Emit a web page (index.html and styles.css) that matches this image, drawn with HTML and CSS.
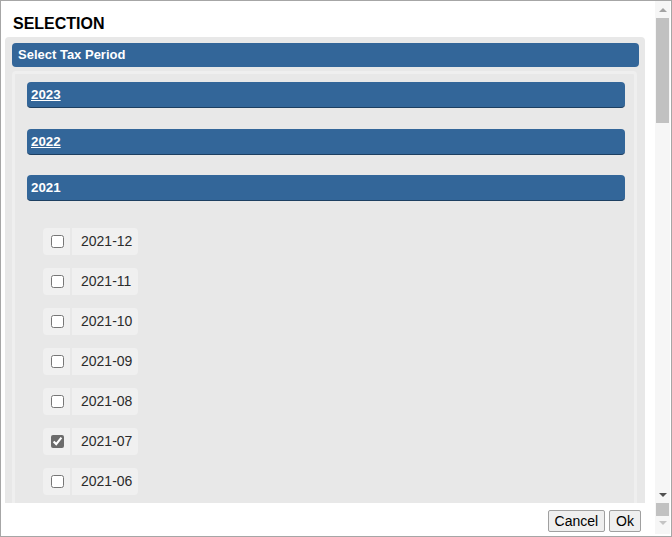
FILE: index.html
```html
<!DOCTYPE html>
<html lang="en">
<head>
    <meta charset="UTF-8">
    <title>Selection</title>
    <link rel="stylesheet" href="styles.css">
</head>
<body>
    <div class="dialog">
        <div class="dialog-body">
            <div class="scroll-area">
                <h1 class="title">SELECTION</h1>
                <!-- Panel with the tax periods -->
                <div class="panel">
                    <div class="panel-header">Select Tax Period</div>
                    <div class="panel-inner">
                        <div class="year-bar"><a href="#">2023</a></div>
                        <div class="year-bar"><a href="#">2022</a></div>
                        <div class="year-bar open">2021</div>
                        <ul class="periods">
                            <li class="period"><span class="check-cell"><input type="checkbox"></span><span class="period-label">2021-12</span></li>
                            <li class="period"><span class="check-cell"><input type="checkbox"></span><span class="period-label">2021-11</span></li>
                            <li class="period"><span class="check-cell"><input type="checkbox"></span><span class="period-label">2021-10</span></li>
                            <li class="period"><span class="check-cell"><input type="checkbox"></span><span class="period-label">2021-09</span></li>
                            <li class="period"><span class="check-cell"><input type="checkbox"></span><span class="period-label">2021-08</span></li>
                            <li class="period"><span class="check-cell"><input type="checkbox" checked></span><span class="period-label">2021-07</span></li>
                            <li class="period"><span class="check-cell"><input type="checkbox"></span><span class="period-label">2021-06</span></li>
                        </ul>
                    </div>
                </div>
            </div>
            <!-- Fake scrollbar -->
            <div class="vscroll">
                <div class="arrow up"></div>
                <div class="thumb"></div>
                <div class="track"></div>
                <div class="arrow down"></div>
            </div>
        </div>
        <div class="dialog-footer">
            <button class="btn">Cancel</button>
            <button class="btn">Ok</button>
            <div class="vscroll small">
                <div class="thumb"></div>
                <div class="arrow down light"></div>
            </div>
        </div>
    </div>
</body>
</html>
```

FILE: styles.css
```css
/* Page */
body {
    margin: 0;
    font-family: "Liberation Sans", Arial, sans-serif;
    background-color: #fff;
}
/* Dialog frame */
.dialog {
    width: 672px;
    height: 537px;
    box-sizing: border-box;
    border: 1px solid #a6a6a6;
    display: flex;
    flex-direction: column;
}
.dialog-body {
    height: 502px;
    display: flex;
}
.scroll-area {
    flex: 1;
    overflow: hidden;
}
/* Title */
.title {
    margin: 14px 0 4px 12px;
    font-size: 16px;
    line-height: 18px;
    font-weight: bold;
    color: #000;
}
/* Grey panel */
.panel {
    margin: 0 10px 0 4px;
    background-color: #e8e8e8;
    border-radius: 4px 4px 0 0;
    padding-top: 6px;
    height: 600px;
}
.panel-header {
    margin: 0 6px 0 7px;
    height: 24px;
    line-height: 24px;
    padding-left: 6px;
    background-color: #336699;
    color: #fff;
    font-size: 13px;
    font-weight: bold;
    border-radius: 4px;
}
.panel-inner {
    margin: 4px 8px 0 7px;
    border: 3px solid #efefef;
    border-bottom: none;
    border-radius: 4px 4px 0 0;
    padding: 8px 9px 0 12px;
    height: 600px;
}
/* Year bars */
.year-bar {
    height: 25px;
    line-height: 26px;
    padding-left: 4px;
    background-color: #336699;
    border-bottom: 1px solid #1d3f61;
    border-radius: 4px;
    color: #fff;
    font-size: 13.33px;
    font-weight: bold;
    margin-bottom: 21px;
}
.year-bar:nth-child(2) {
    margin-bottom: 20px;
}
.year-bar a {
    color: #fff;
}
.year-bar.open {
    margin-bottom: 27px;
}
/* Period rows */
.periods {
    list-style: none;
    margin: 0;
    padding: 0 0 0 16px;
}
.period {
    display: flex;
    gap: 2px;
    height: 27px;
    margin-bottom: 13px;
}
.check-cell {
    width: 27px;
    background-color: #f0f0f0;
    border-radius: 4px 0 0 4px;
    display: flex;
    align-items: center;
    justify-content: center;
}
.check-cell input {
    margin: 0 0 0 1px;
    width: 13px;
    height: 13px;
    accent-color: #6b6b6b;
}
.period-label {
    width: 57px;
    padding-left: 9px;
    background-color: #f0f0f0;
    border-radius: 0 4px 4px 0;
    font-size: 14px;
    line-height: 27px;
    color: #2b2b2b;
}
/* Scrollbar */
.vscroll {
    width: 15px;
    margin-right: 1px;
    background-color: #f6f6f6;
    display: flex;
    flex-direction: column;
    align-items: center;
}
.thumb {
    width: 13px;
    height: 105px;
    background-color: #c1c1c1;
}
.track {
    flex: 1;
}
.arrow {
    width: 15px;
    height: 17px;
    display: flex;
    align-items: center;
    justify-content: center;
}
.arrow::after {
    content: "";
    border-left: 4px solid transparent;
    border-right: 4px solid transparent;
}
.arrow.up::after {
    border-bottom: 4px solid #a3a3a3;
}
.arrow.down::after {
    border-top: 4px solid #505050;
}
.arrow.down.light::after {
    border-top-color: #c4c4c4;
}
/* Footer */
.dialog-footer {
    flex: 1;
    display: flex;
    justify-content: flex-end;
    align-items: flex-start;
    gap: 4px;
}
.btn {
    margin-top: 7px;
    height: 22px;
    padding: 0 6px;
    font-family: "Liberation Sans", Arial, sans-serif;
    font-size: 14px;
    color: #000;
    background-color: #efefef;
    border: 1px solid #a0a0a0;
    border-radius: 2px;
}
.btn + .btn {
    margin-right: 10px;
}
.vscroll.small {
    height: 31px;
    justify-content: flex-start;
}
.vscroll.small .thumb {
    height: 13px;
}
.vscroll.small .arrow {
    height: 14px;
}
```
